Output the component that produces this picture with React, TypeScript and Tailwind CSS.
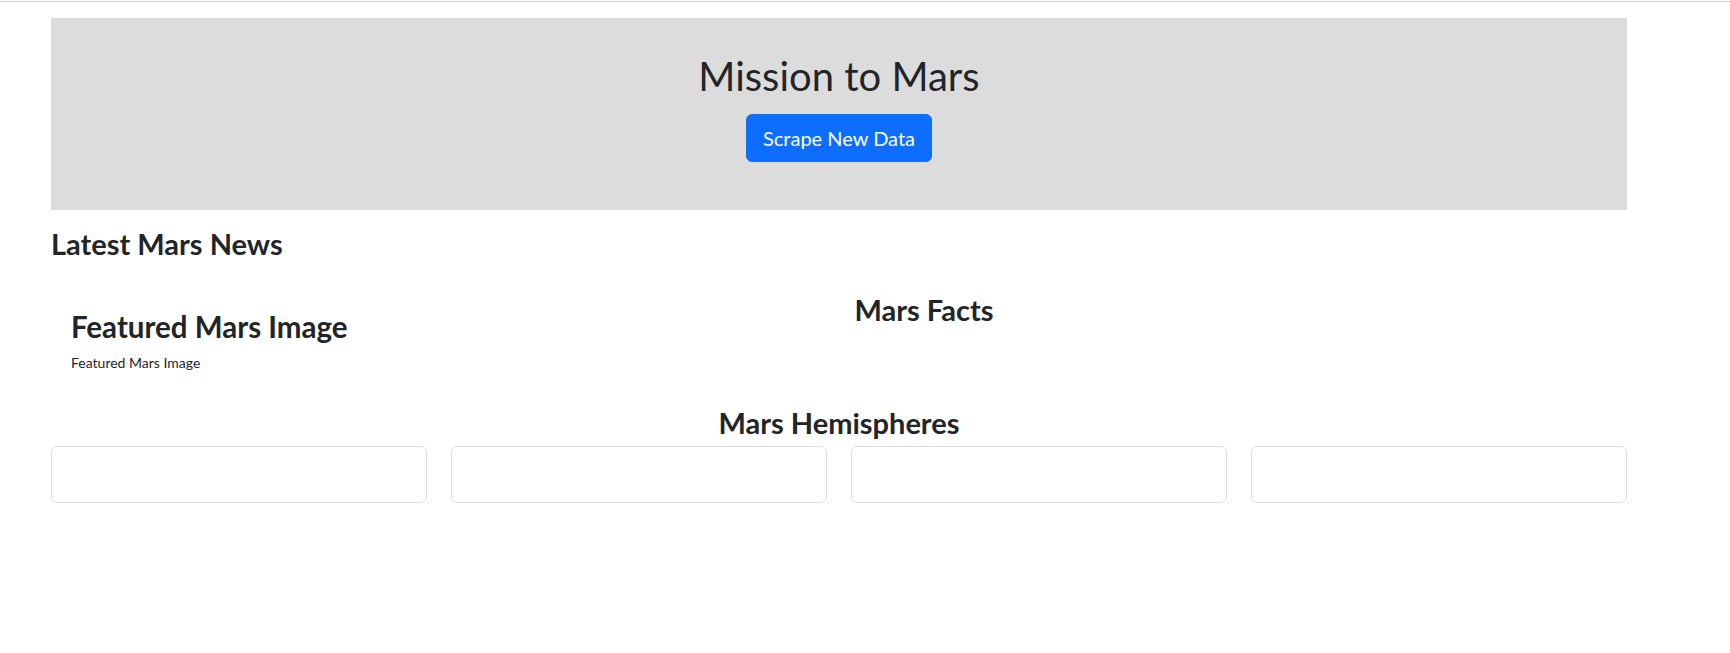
import React from 'react';

const hemispheres = [1, 2, 3, 4];

export default function App() {
  return (
    <div className="min-h-[653px] bg-white text-[#212529] font-['Lato',sans-serif]">
      <div className="border-t border-[#cfcfcf] h-[1px] mt-[1px]" />
      <div className="ml-[51px] w-[1576px] pt-[16px]">
        {/* jumbotron */}
        <div className="bg-[#dcdcdc] text-center pt-[34px] pb-[48px]">
          <h1 className="text-[40px] leading-[1.2] font-normal">Mission to Mars</h1>
          <button className="mt-[14px] bg-[#0d6efd] text-white text-[20px] leading-[1.5] px-4 py-2 border border-[#0d6efd] rounded-[6px]">
            Scrape New Data
          </button>
        </div>

        <h3 className="mt-[17px] text-[29px] leading-[1.2] font-bold">Latest Mars News</h3>

        <div className="mt-[31px] flex items-start">
          <div className="w-[376px] pl-[20px] pt-[16px]">
            <h3 className="text-[29.5px] leading-[1.2] font-bold whitespace-nowrap">Featured Mars Image</h3>
            <p className="mt-[8px] text-[14px] leading-[1.5]">Featured Mars Image</p>
          </div>
          <div className="w-[994px] text-center">
            <h3 className="text-[29px] leading-[1.2] font-bold">Mars Facts</h3>
          </div>
        </div>

        <h3 className="mt-[33px] text-center text-[29px] leading-[1.2] font-bold">Mars Hemispheres</h3>
        <div className="mt-[5px] grid grid-cols-4 gap-6">
          {hemispheres.map((h) => (
            <div key={h} className="h-[57px] border border-[#dedede] rounded-[6px] bg-white" />
          ))}
        </div>
      </div>
    </div>
  );
}
